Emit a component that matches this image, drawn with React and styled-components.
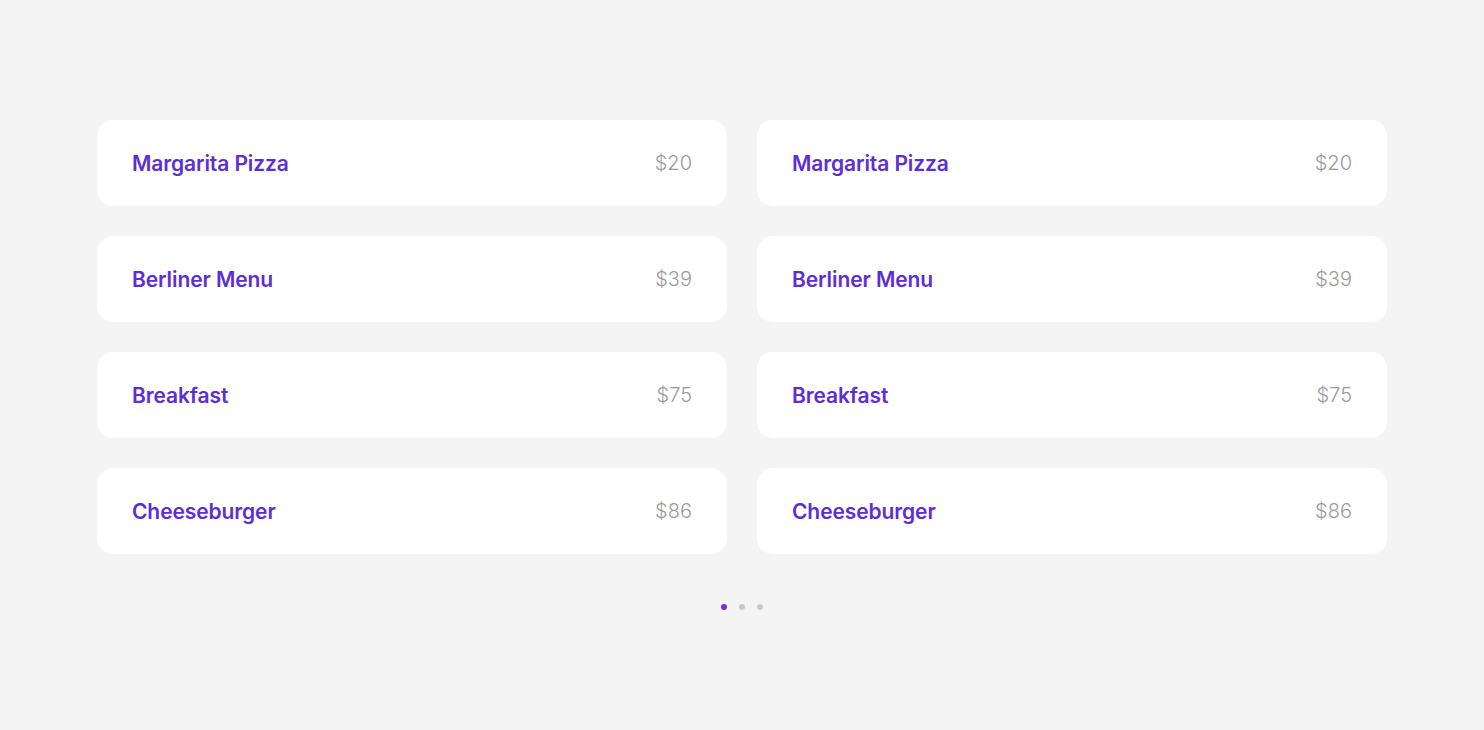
import React from 'react';
import styled, { createGlobalStyle } from 'styled-components';

const GlobalStyle = createGlobalStyle`
  body {
    margin: 0;
    background: #f4f4f4;
    font-family: Inter, "Noto Sans", sans-serif;
  }
`;

const Page = styled.div`
  min-height: 730px;
  padding: 120px 97px 0;
  box-sizing: border-box;
`;

const Grid = styled.div`
  display: grid;
  grid-template-columns: 1fr 1fr;
  gap: 30px;
`;

const Card = styled.div`
  height: 86px;
  background: #fff;
  border-radius: 16px;
  display: flex;
  align-items: center;
  justify-content: space-between;
  padding: 0 35px;
  box-sizing: border-box;
`;

const Name = styled.span`
  font-size: 21px;
  font-weight: 600;
  letter-spacing: -0.1px;
  color: #5b2ed8;
`;

const Price = styled.span`
  font-size: 20px;
  font-weight: 300;
  color: #9a9a9a;
`;

const Dots = styled.div`
  display: flex;
  justify-content: center;
  gap: 12px;
  margin-top: 50px;
`;

const Dot = styled.span`
  width: 6px;
  height: 6px;
  border-radius: 50%;
  background: ${({ active }) => (active ? '#6a32dc' : '#c8c8c8')};
`;

const items = [
  { name: 'Margarita Pizza', price: '$20' },
  { name: 'Berliner Menu', price: '$39' },
  { name: 'Breakfast', price: '$75' },
  { name: 'Cheeseburger', price: '$86' },
];

const App = () => (
  <>
    <GlobalStyle />
    <Page>
      <Grid>
        {items.flatMap((item, i) =>
          [0, 1].map(col => (
            <Card key={`${i}-${col}`}>
              <Name>{item.name}</Name>
              <Price>{item.price}</Price>
            </Card>
          ))
        )}
      </Grid>
      <Dots>
        <Dot active />
        <Dot />
        <Dot />
      </Dots>
    </Page>
  </>
);

export default App;
